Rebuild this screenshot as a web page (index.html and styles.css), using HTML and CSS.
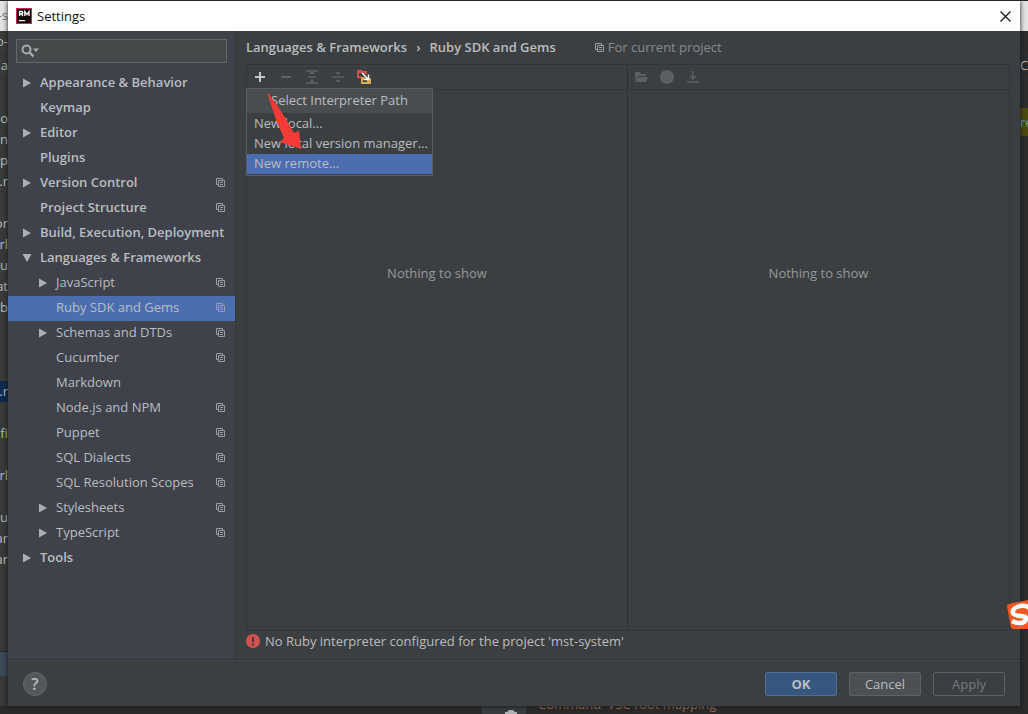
FILE: index.html
```html
<!DOCTYPE html>
<html lang="en">
<head>
<meta charset="utf-8">
<title>Settings</title>
<link rel="stylesheet" href="styles.css">
</head>
<body>
<svg class="defs" aria-hidden="true">
  <symbol id="copy" viewBox="0 0 9 9"><path d="M0.5 6.5V0.5H6.5M0.5 6.5H2M6.5 0.5V2M2.5 2.5h6v6h-6zM4 4.5h3M4 6.5h3" fill="none" stroke="currentColor"/></symbol>
  <symbol id="closed" viewBox="0 0 8 10"><path d="M0 0.5L8 5L0 9.5z" fill="currentColor"/></symbol>
  <symbol id="opened" viewBox="0 0 10 8"><path d="M0.5 0h9L5 8z" fill="currentColor"/></symbol>
</svg>
<div class="desktop">
  <div class="edge edge-left" aria-hidden="true">
    <div class="edge-title">-s</div>
    <div class="edge-bar">o-</div>
    <div class="edge-bar edge-path">a</div>
    <div class="edge-files">
      <p>o</p><p>in</p><p>yp</p><p>e.r</p><p></p><p>or</p><p>rl</p><p>_u</p><p>at</p><p>b</p><p></p><p></p><p></p><p class="edge-picked">.r</p><p></p><p>fi</p><p></p><p>rl</p><p></p><p>su</p><p>ar</p><p>ar</p>
    </div>
    <div class="edge-status"></div>
  </div>
  <main class="dialog">
    <header class="titlebar">
      <svg class="logo" viewBox="0 0 16 16" aria-hidden="true"><path d="M0 0h16v16H0z" fill="#d0235a"/><path d="M1 1h14v14H1z" fill="#0c0508"/><path d="M3.5 8V3.5h2q1.3 0 1.3 1.2T5.5 6H3.500M5.300 6L7 8M8.800 8V3.500L10.900 6.500L13 3.500V8" fill="none" stroke="#fff" stroke-width="1.300"/><path d="M3 12h6v1.200H3z" fill="#fff"/></svg>
      <h1>Settings</h1>
      <button class="close" aria-label="Close"><svg viewBox="0 0 11 11"><path d="M0.500 0.500l10 10M10.500 0.500l-10 10" fill="none" stroke="#111" stroke-width="1.200"/></svg></button>
    </header>
    <div class="content">
      <aside class="sidebar">
        <label class="search"><svg viewBox="0 0 19 14" aria-hidden="true"><circle cx="5.500" cy="5.500" r="4" fill="none" stroke="currentColor" stroke-width="2"/><path d="M8.500 8.500l4 4" stroke="currentColor" stroke-width="2.400"/><path d="M12 4.500h6L15 8z" fill="currentColor"/></svg><input type="text" aria-label="Search settings"></label>
        <nav class="tree" aria-label="Settings categories">
          <button class="row group"><span class="arrow"><svg class="shut"><use href="#closed"/></svg></span><span class="name">Appearance &amp; Behavior</span></button>
          <button class="row group"><span class="arrow"></span><span class="name">Keymap</span></button>
          <button class="row group"><span class="arrow"><svg class="shut"><use href="#closed"/></svg></span><span class="name">Editor</span></button>
          <button class="row group"><span class="arrow"></span><span class="name">Plugins</span></button>
          <button class="row group"><span class="arrow"><svg class="shut"><use href="#closed"/></svg></span><span class="name">Version Control</span><svg class="copy"><use href="#copy"/></svg></button>
          <button class="row group"><span class="arrow"></span><span class="name">Project Structure</span><svg class="copy"><use href="#copy"/></svg></button>
          <button class="row group"><span class="arrow"><svg class="shut"><use href="#closed"/></svg></span><span class="name">Build, Execution, Deployment</span></button>
          <button class="row group" aria-expanded="true"><span class="arrow"><svg class="open"><use href="#opened"/></svg></span><span class="name">Languages &amp; Frameworks</span></button>
          <button class="row child"><span class="arrow"><svg class="shut"><use href="#closed"/></svg></span><span class="name">JavaScript</span><svg class="copy"><use href="#copy"/></svg></button>
          <button class="row child selected" aria-current="page"><span class="arrow"></span><span class="name">Ruby SDK and Gems</span><svg class="copy"><use href="#copy"/></svg></button>
          <button class="row child"><span class="arrow"><svg class="shut"><use href="#closed"/></svg></span><span class="name">Schemas and DTDs</span><svg class="copy"><use href="#copy"/></svg></button>
          <button class="row child"><span class="arrow"></span><span class="name">Cucumber</span><svg class="copy"><use href="#copy"/></svg></button>
          <button class="row child"><span class="arrow"></span><span class="name">Markdown</span></button>
          <button class="row child"><span class="arrow"></span><span class="name">Node.js and NPM</span><svg class="copy"><use href="#copy"/></svg></button>
          <button class="row child"><span class="arrow"></span><span class="name">Puppet</span><svg class="copy"><use href="#copy"/></svg></button>
          <button class="row child"><span class="arrow"></span><span class="name">SQL Dialects</span><svg class="copy"><use href="#copy"/></svg></button>
          <button class="row child"><span class="arrow"></span><span class="name">SQL Resolution Scopes</span><svg class="copy"><use href="#copy"/></svg></button>
          <button class="row child"><span class="arrow"><svg class="shut"><use href="#closed"/></svg></span><span class="name">Stylesheets</span><svg class="copy"><use href="#copy"/></svg></button>
          <button class="row child"><span class="arrow"><svg class="shut"><use href="#closed"/></svg></span><span class="name">TypeScript</span><svg class="copy"><use href="#copy"/></svg></button>
          <button class="row group"><span class="arrow"><svg class="shut"><use href="#closed"/></svg></span><span class="name">Tools</span></button>
        </nav>
      </aside>
      <section class="page">
        <div class="crumbs">
          <h2>Languages &amp; Frameworks</h2><span class="sep">›</span><h2>Ruby SDK and Gems</h2>
          <span class="scope"><svg class="copy"><use href="#copy"/></svg>For current project</span>
        </div>
        <div class="panels">
          <section class="panel">
            <div class="tools">
              <button aria-label="Add"><svg viewBox="0 0 16 16"><path d="M8 3v10M3 8h10" stroke="#c4c6c8" stroke-width="2"/></svg></button>
              <button aria-label="Remove" disabled><svg viewBox="0 0 16 16"><path d="M3 8h10" stroke="currentColor" stroke-width="2"/></svg></button>
              <button aria-label="Edit" disabled><svg viewBox="0 0 16 16"><path d="M2 2h12M2 14h12M4 8h8" stroke="currentColor" stroke-width="1.500"/><path d="M5 3l3 3 3-3zM5 13l3-3 3 3z" fill="currentColor"/></svg></button>
              <button aria-label="Collapse" disabled><svg viewBox="0 0 16 16"><path d="M2 8h12" stroke="currentColor" stroke-width="1.500"/><path d="M5 3h6L8 6zM5 13h6l-3-3z" fill="currentColor"/></svg></button>
              <button aria-label="Edit mappings"><svg viewBox="0 0 16 16"><path d="M1 1h5l1 1h4v3H8L5 4v5H1z" fill="#c75450"/><path d="M3 4h2v3H3z" fill="#3c3f41"/><path d="M5 8h3l1 1h6v6H5z" fill="#dda94e"/><path d="M7 11h4v2H7z" fill="#3c3f41"/><path d="M6 4l6 6M12.500 5.500v5H8" fill="none" stroke="#f2f2f2" stroke-width="1.500"/></svg></button>
            </div>
            <p class="empty">Nothing to show</p>
            <div class="popup" role="menu">
              <div class="popup-title">Select Interpreter Path</div>
              <div class="popup-list"><button role="menuitem">New local...</button><button role="menuitem">New local version manager...</button><button role="menuitem" class="active">New remote...</button></div>
            </div>
            <svg class="pointer" viewBox="0 0 36 60" aria-hidden="true"><path d="M0 0L10 13L19 27L27 41L32 39L34 57L13 50L17 46L9 28z" fill="#f43b38"/></svg>
          </section>
          <section class="panel">
            <div class="tools">
              <button aria-label="Open" disabled><svg viewBox="0 0 16 16"><path d="M2 3h5l1 2h5v2H5l-3 5zM5 8h10l-2 5H2z" fill="currentColor"/></svg></button>
              <button aria-label="Status" disabled><svg viewBox="0 0 16 16"><circle cx="8" cy="8" r="7" fill="currentColor"/></svg></button>
              <button aria-label="Download" disabled><svg viewBox="0 0 16 16"><path d="M8 2v8M5 7l3 3 3-3M2 13h12" fill="none" stroke="currentColor" stroke-width="1.500"/></svg></button>
            </div>
            <p class="empty">Nothing to show</p>
          </section>
        </div>
        <p class="error" role="alert"><svg viewBox="0 0 14 14" aria-hidden="true"><circle cx="7" cy="7" r="7" fill="#d25252"/><path d="M7 3v5M7 9.500v2" stroke="#4c3335" stroke-width="2"/></svg>No Ruby interpreter configured for the project 'mst-system'</p>
      </section>
    </div>
    <footer class="footer">
      <button class="help" aria-label="Help">?</button>
      <button class="btn primary">OK</button><button class="btn">Cancel</button><button class="btn" disabled>Apply</button>
    </footer>
  </main>
  <div class="edge edge-right" aria-hidden="true">
    <div class="edge-title"></div><div class="edge-bar"></div><div class="edge-bar edge-path">C</div>
    <div class="edge-mark">re</div>
  </div>
  <div class="below" aria-hidden="true"><span class="below-tab"><svg viewBox="0 0 12 4"><path d="M0 4V2h2l2-2h4l2 2h2v2z" fill="#aeb0b2"/></svg></span><span class="below-text">Command 'VSC root mapping</span></div>
  <svg class="badge" viewBox="0 0 21 30" aria-hidden="true"><path d="M0 6Q0 4 2 4L21 0V29H7Q4 29 3.500 26z" fill="#f05a22"/><path d="M23 8C15 3 4 8 6 13S20 14 19 19S11 24 5 21" fill="none" stroke="#fff" stroke-width="4.500"/></svg>
</div>
</body>
</html>
```

FILE: styles.css
```css
* { box-sizing: border-box; }
body { margin: 0; background: #2b2b2b; color: #bbbdbf; font: 13px/20px "Open Sans", "Noto Sans", sans-serif; }
h1, h2, p { margin: 0; font-size: inherit; }
h2 { font-weight: 600; }
button { margin: 0; padding: 0; border: 0; background: none; color: inherit; font: inherit; text-align: left; }
svg { display: block; flex: none; }
.defs { position: absolute; width: 0; height: 0; }
.desktop { position: relative; display: grid; grid-template: minmax(0, 1fr) 8px / 8px minmax(0, 1fr) 8px; height: 100vh; overflow: hidden; border-top: 1px solid #252326; }

.edge { overflow: hidden; background: #383b38; white-space: nowrap; display: flex; flex-direction: column; }
.edge-title { height: 30px; padding-top: 4px; background: #e4e4e4; color: #777; }
.edge-bar { height: 24px; border-bottom: 1px solid #303330; }
.edge-path { margin-bottom: 29px; }
.edge-files p { height: 21px; }
.edge-left .edge-title, .edge-left .edge-bar, .edge-left p { display: flex; justify-content: flex-end; }
.edge-picked { background: #0d2b50; }
.edge-status { height: 25px; margin-top: auto; margin-bottom: 30px; background: #3d4a57; border-top: 1px solid #2b2b2b; }
.edge-right { background: #2b2c2d; }
.edge-mark { height: 28px; padding-top: 4px; background: #4c4a10; color: #5b9bc9; }

.dialog { display: flex; flex-direction: column; min-height: 0; background: #3c3f41; box-shadow: 0 0 5px #151515; z-index: 1; }
.titlebar { display: flex; align-items: center; gap: 5px; height: 30px; padding: 0 9px 0 8px; background: #fff; color: #111; }
.titlebar h1 { flex: 1; font-weight: 400; }
.logo { width: 16px; height: 16px; }
.close svg { width: 11px; height: 11px; }
.content { flex: 1; min-height: 0; display: grid; grid-template-columns: 228px minmax(0, 1fr); border-bottom: 1px solid #303335; }
.sidebar { background: #3f424b; border-right: 1px solid #35383b; }
.search { display: flex; align-items: center; height: 24px; margin: 8px; padding-left: 4px; background: #45494a; border: 1px solid #63676a; color: #a9abad; }
.search svg { width: 19px; height: 14px; }
.search input { flex: 1; min-width: 0; border: 0; outline: 0; background: none; color: inherit; font: inherit; }
.tree { display: flex; flex-direction: column; }
.row { display: flex; align-items: center; height: 25px; padding: 0 10px 2px 13px; }
.group { font-weight: 600; }
.child { padding-left: 29px; }
.arrow { flex: none; width: 19px; padding-left: 1px; color: #adb0b3; }
.shut { width: 8px; height: 10px; margin-left: 1px; }
.open { width: 10px; height: 8px; }
.name { flex: 1; min-width: 0; padding-bottom: 2px; white-space: nowrap; }
.copy { width: 9px; height: 9px; color: #999ca1; }
.selected { background: #4b6eaf; }

.page { display: flex; flex-direction: column; padding: 6px 10px 8px 10px; min-width: 0; }
.crumbs { display: flex; align-items: center; height: 20px; margin-bottom: 7px; white-space: nowrap; }
.sep { margin: 0 9px; font-weight: 600; }
.scope { display: flex; align-items: center; gap: 4px; margin-left: 39px; color: #888b8d; }
.panels { flex: 1; display: grid; grid-template-columns: 380fr 382fr; border: 1px solid #333638; }
.panel { position: relative; min-width: 0; display: flex; flex-direction: column; }
.panel + .panel { border-left: 1px solid #303335; }
.tools { display: flex; align-items: center; gap: 10px; height: 25px; padding: 0 5px; border-bottom: 1px solid #333638; color: #5d6062; }
.tools svg { width: 16px; height: 16px; }
.empty { margin-top: 173px; text-align: center; color: #96999b; }
.popup { position: absolute; top: 23px; left: -1px; width: 187px; padding-bottom: 1px; border: 1px solid #5b5e60; background: #3c3f41; }
.popup-title { height: 24px; line-height: 22px; text-align: center; background: #4a4d50; }
.popup-list { display: flex; flex-direction: column; padding-top: 1px; }
.popup-list button { height: 20px; padding: 0 0 2px 7px; line-height: 18px; white-space: nowrap; }
.popup-list .active { background: #4b6eaf; }
.pointer { position: absolute; left: 20px; top: 27px; width: 36px; height: 60px; }
.error { display: flex; align-items: center; gap: 5px; }
.error svg { width: 14px; height: 14px; }
.footer { display: flex; align-items: center; gap: 12px; height: 46px; padding: 0 15px; border-top: 1px solid #45484a; }
.help { width: 24px; height: 24px; margin-right: auto; border: 1px solid #65686a; border-radius: 50%; background: #55585a; text-align: center; font-size: 16px; font-weight: 600; line-height: 22px; }
.btn { width: 72px; height: 24px; border: 1px solid #5e6163; border-radius: 2px; background: #4c5052; text-align: center; line-height: 22px; }
.primary { background: #365880; border-color: #4c708c; font-weight: 700; }
.btn:disabled { background: none; color: #777a7c; }
.below { grid-column: 1 / -1; display: flex; align-items: flex-end; padding-left: 482px; }
.below-tab { display: flex; align-items: flex-end; width: 44px; height: 8px; margin-right: 12px; padding-left: 23px; background: #393c3e; }
.below-tab svg { width: 12px; height: 4px; }
.below-text { height: 20px; color: #a06a58; white-space: nowrap; }
.badge { position: absolute; z-index: 2; right: 0; top: 599px; width: 21px; height: 30px; }
```
